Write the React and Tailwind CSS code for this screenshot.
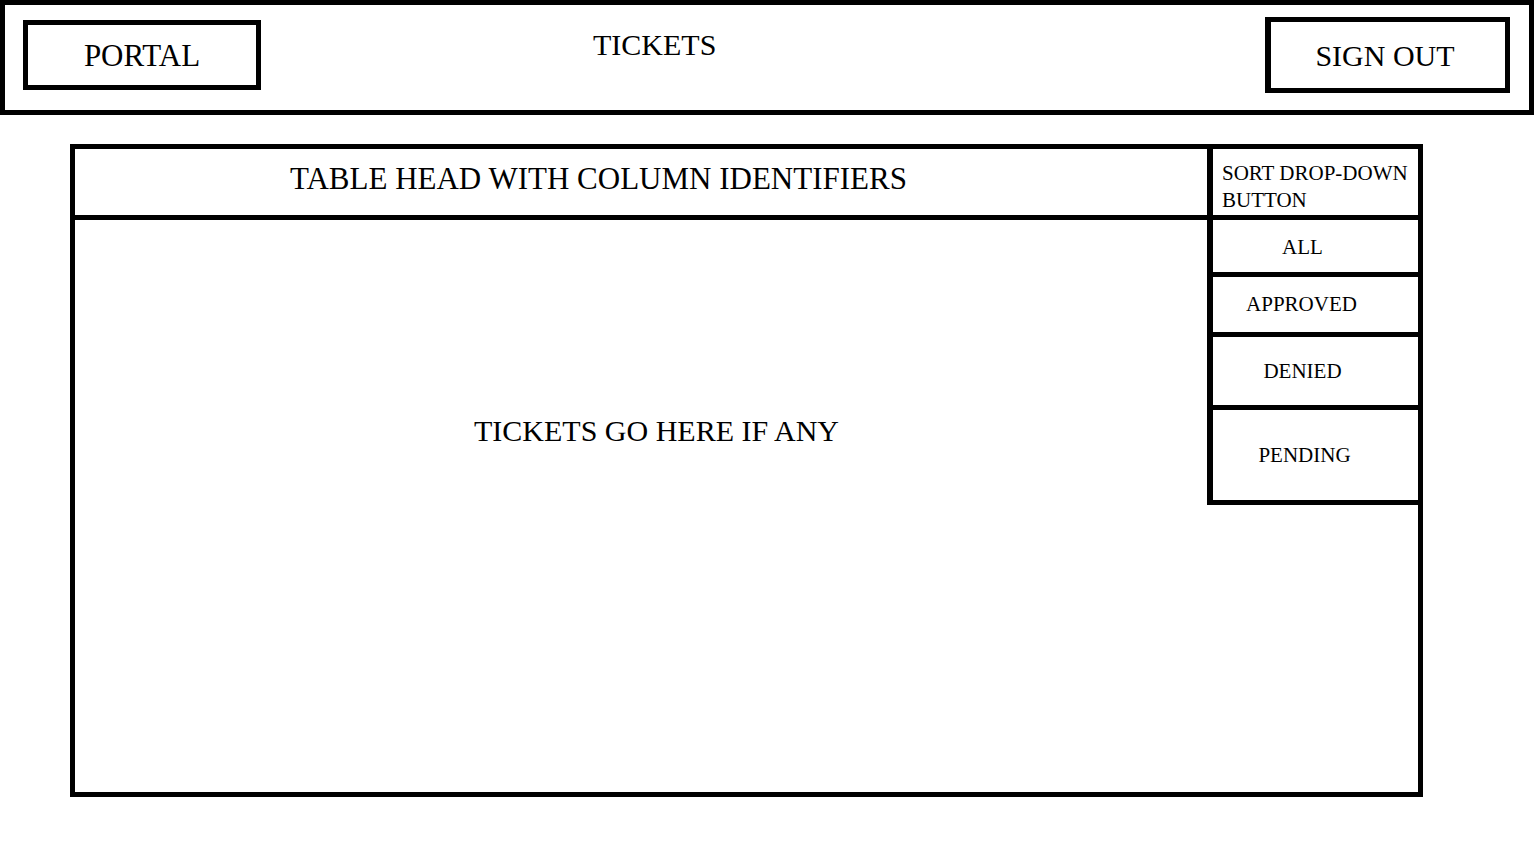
export default function App() {
  return (
    <div className="w-[1536px] h-[864px] bg-white text-black font-['Liberation_Serif',serif] overflow-hidden">
      <header className="w-[1534px] h-[115px] border-[5px] border-black flex items-start pl-[18px] pr-[19px]">
        <button className="mt-[15px] w-[238px] h-[70px] border-[5px] border-black flex items-center justify-center text-[31px] leading-none pt-[1px]">
          PORTAL
        </button>
        <div className="flex-1 pl-[332px] pt-[25px] text-[30px] leading-none">TICKETS</div>
        <button className="mt-[12px] w-[245px] h-[76px] border-[5px] border-black border-l-[6px] flex items-center justify-center text-[30px] leading-none pt-[1px] pr-[6px]">
          SIGN OUT
        </button>
      </header>

      <main className="relative ml-[70px] mt-[29px] w-[1353px] h-[653px] border-[5px] border-black flex flex-col">
        <div className="h-[71px] border-b-[5px] border-black pl-[215px] pt-[14px] text-[31px] leading-none">
          TABLE HEAD WITH COLUMN IDENTIFIERS
        </div>
        <div className="flex-1 pl-[399px] pt-[196px] text-[30px] leading-none">TICKETS GO HERE IF ANY</div>

        <div className="absolute left-[1132px] top-[-5px] right-[-5px] bg-white border-[5px] border-l-[6px] border-black flex flex-col text-[21px]">
          <div className="h-[71px] border-b-[5px] border-black pl-[9px] pt-[11px] leading-[27px]">
            SORT DROP-DOWN
            <br />
            BUTTON
          </div>
          <div className="h-[57px] border-b-[5px] border-black flex items-center justify-center pr-[26px] leading-none pt-[2px]">ALL</div>
          <div className="h-[60px] border-b-[5px] border-black flex items-center justify-center pr-[28px] leading-none">APPROVED</div>
          <div className="h-[73px] border-b-[5px] border-black flex items-center justify-center pr-[26px] leading-none">DENIED</div>
          <div className="h-[90px] flex items-center justify-center pr-[22px] leading-none">PENDING</div>
        </div>
      </main>
    </div>
  );
}
